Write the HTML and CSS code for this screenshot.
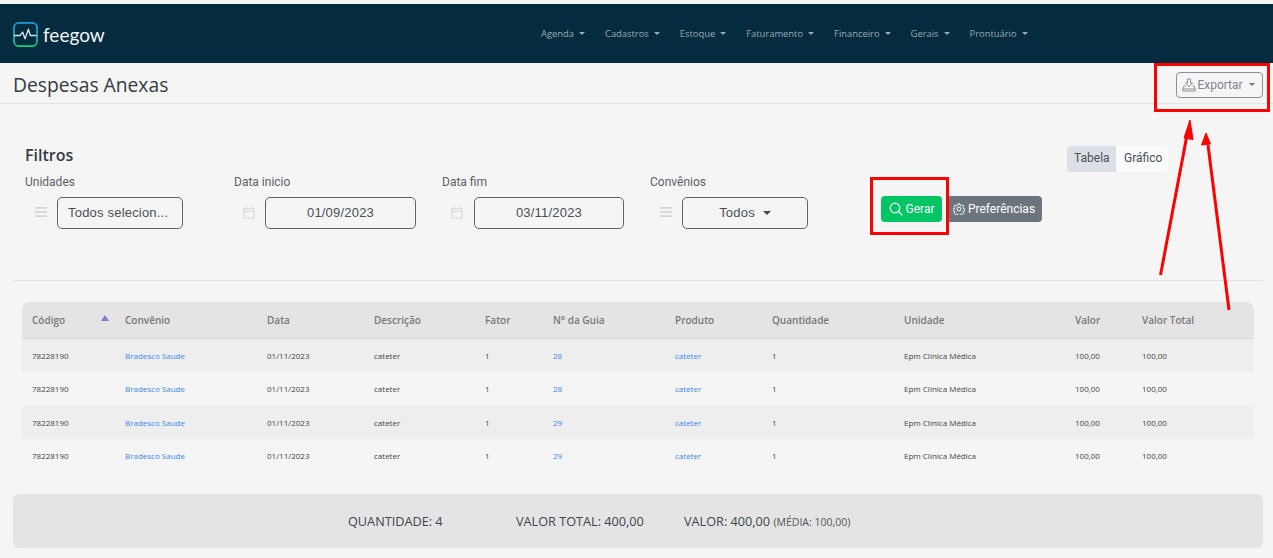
FILE: index.html
```html
<!DOCTYPE html>
<html lang="pt-BR">
<head>
<meta charset="utf-8">
<title>Despesas Anexas</title>
<link rel="stylesheet" href="styles.css">
</head>
<body>
<header class="topbar">
  <a class="brand">
    <svg class="logo" width="25" height="25" viewBox="0 0 26 26" fill="none">
      <defs><linearGradient id="lg" x1="0" y1="0" x2="0" y2="1"><stop offset="0" stop-color="#1e9bd6"/><stop offset=".55" stop-color="#1eaacb"/><stop offset="1" stop-color="#12d27e"/></linearGradient></defs>
      <rect x="1" y="1" width="24" height="24" rx="5" stroke="url(#lg)" stroke-width="1.8"/>
      <path d="M1 14h6.500l2.500-3.500 2.500 7 3.500-10 2 6.500h6.500" stroke="#cfe6ec" stroke-width="1.400" stroke-linejoin="round"/>
    </svg>
    <span class="brand-name">feegow</span>
  </a>
  <nav class="menu">
    <a>Agenda<i class="caret"></i></a>
    <a>Cadastros<i class="caret"></i></a>
    <a>Estoque<i class="caret"></i></a>
    <a>Faturamento<i class="caret"></i></a>
    <a>Financeiro<i class="caret"></i></a>
    <a>Gerais<i class="caret"></i></a>
    <a>Prontuário<i class="caret"></i></a>
  </nav>
</header>

<section class="titlebar">
  <h1>Despesas Anexas</h1>
  <button class="btn-export">
    <svg width="14" height="14" viewBox="0 0 14 14" fill="none" stroke="#8b929a" stroke-width="1"><path d="M5.500 1h3v4h2L7 8.800 3.500 5h2z"/><path d="M3.500 8H2L.8 11v2h12.400v-2L12 8h-1.500M.8 11h12.400"/></svg>
    Exportar<i class="caret dark"></i>
  </button>
</section>

<main class="content">
  <div class="filters-head">
    <h2>Filtros</h2>
    <div class="tabs"><span class="tab active">Tabela</span><span class="tab">Gráfico</span></div>
  </div>
  <div class="filters">
    <div class="field f1">
      <label>Unidades</label>
      <div class="ctrl">
        <svg class="ico" width="12" height="12" viewBox="0 0 12 12" fill="#d4d4d4"><rect y="1" width="12" height="1.600"/><rect y="5.200" width="12" height="1.600"/><rect y="9.400" width="12" height="1.600"/></svg>
        <div class="box w126">Todos selecion...</div>
      </div>
    </div>
    <div class="field f2">
      <label>Data inicio</label>
      <div class="ctrl">
        <svg class="ico" width="12" height="13" viewBox="0 0 12 13" fill="none" stroke="#d8d8d8" stroke-width="1.200"><rect x="1" y="2.500" width="10" height="9.500" rx="1"/><path d="M1 5h10M3.500 .5v2.500M8.500 .5v2.500"/></svg>
        <div class="box w151 center">01/09/2023</div>
      </div>
    </div>
    <div class="field f3">
      <label>Data fim</label>
      <div class="ctrl">
        <svg class="ico wide" width="12" height="13" viewBox="0 0 12 13" fill="none" stroke="#d8d8d8" stroke-width="1.200"><rect x="1" y="2.500" width="10" height="9.500" rx="1"/><path d="M1 5h10M3.500 .5v2.500M8.500 .5v2.500"/></svg>
        <div class="box w150 center">03/11/2023</div>
      </div>
    </div>
    <div class="field f4">
      <label>Convênios</label>
      <div class="ctrl">
        <svg class="ico" width="12" height="12" viewBox="0 0 12 12" fill="#d4d4d4"><rect y="1" width="12" height="1.600"/><rect y="5.200" width="12" height="1.600"/><rect y="9.400" width="12" height="1.600"/></svg>
        <div class="box w126 center">Todos<i class="caret select"></i></div>
      </div>
    </div>
    <div class="actions">
      <button class="btn green">
        <svg width="14" height="14" viewBox="0 0 14 14" fill="none" stroke="#fff" stroke-width="1.200"><circle cx="6" cy="6" r="4.800"/><path d="M9.500 9.500l3.800 3.800"/></svg>
        Gerar
      </button>
      <button class="btn gray">
        <svg width="12" height="12" viewBox="0 0 16 16" fill="none" stroke="#fff" stroke-width="1.300"><circle cx="8" cy="8" r="2.600"/><path d="M6.800 1h2.400l.4 2 1.500.7 1.800-1.100 1.600 1.700-1.100 1.700.6 1.500 2 .4v2.300l-2 .5-.6 1.500 1.100 1.700-1.600 1.600-1.800-1.100-1.500.7-.4 2H6.800l-.4-2-1.500-.7-1.800 1.100-1.600-1.600 1.100-1.700-.6-1.500-2-.5V7.900l2-.4.600-1.500-1.100-1.700 1.600-1.700 1.800 1.100 1.500-.7z"/></svg>
        Preferências
      </button>
    </div>
  </div>
  <hr class="divider">
  <table class="grid">
    <colgroup>
      <col class="c1"><col class="c2"><col class="c3"><col class="c4"><col class="c5"><col class="c6"><col class="c7"><col class="c8"><col class="c9"><col class="c10"><col class="c11">
    </colgroup>
    <thead>
      <tr><th class="sorted">Código</th><th>Convênio</th><th>Data</th><th>Descrição</th><th>Fator</th><th>N° da Guia</th><th>Produto</th><th>Quantidade</th><th>Unidade</th><th>Valor</th><th>Valor Total</th></tr>
    </thead>
    <tbody>
      <tr><td>78228190</td><td><a>Bradesco Saude</a></td><td>01/11/2023</td><td>cateter</td><td>1</td><td><a>28</a></td><td><a>cateter</a></td><td>1</td><td>Epm Clinica Médica</td><td>100,00</td><td>100,00</td></tr>
      <tr><td>78228190</td><td><a>Bradesco Saude</a></td><td>01/11/2023</td><td>cateter</td><td>1</td><td><a>28</a></td><td><a>cateter</a></td><td>1</td><td>Epm Clinica Médica</td><td>100,00</td><td>100,00</td></tr>
      <tr><td>78228190</td><td><a>Bradesco Saude</a></td><td>01/11/2023</td><td>cateter</td><td>1</td><td><a>29</a></td><td><a>cateter</a></td><td>1</td><td>Epm Clinica Médica</td><td>100,00</td><td>100,00</td></tr>
      <tr><td>78228190</td><td><a>Bradesco Saude</a></td><td>01/11/2023</td><td>cateter</td><td>1</td><td><a>29</a></td><td><a>cateter</a></td><td>1</td><td>Epm Clinica Médica</td><td>100,00</td><td>100,00</td></tr>
    </tbody>
  </table>
  <div class="summary">
    <span class="s1">QUANTIDADE: 4</span>
    <span class="s2">VALOR TOTAL: 400,00</span>
    <span>VALOR: 400,00 <small>(MÉDIA: 100,00)</small></span>
  </div>
</main>

<div class="mark mark-export"></div>
<div class="mark mark-gerar"></div>
<svg class="arrows" width="1273" height="558" viewBox="0 0 1273 558" fill="#ff0000" stroke="#ff0000">
  <path d="M1160.500 275L1187 135" stroke-width="3" fill="none"/>
  <path d="M1229 310L1208 145" stroke-width="3" fill="none"/>
  <path d="M1190 120l-6 18 9 1.500z" stroke-width="1"/>
  <path d="M1206 133l-4.500 12 9-1z" stroke-width="1"/>
</svg>
</body>
</html>
```
FILE: styles.css
```css
* { box-sizing: border-box; }
html, body { margin: 0; height: 100%; }
body {
  background: #f5f5f5;
  font-family: "Open Sans", "Noto Sans", sans-serif;
  color: #333;
  overflow: hidden;
  padding-top: 4px;
  position: relative;
}
.topbar {
  height: 59px;
  background: #042c3e;
  display: flex;
  align-items: center;
  padding-left: 13px;
}
.brand { display: flex; align-items: center; gap: 5px; width: 528px; }
.logo { display: block; margin-top: 2px; }
.brand-name {
  font-family: "Lato", sans-serif;
  font-size: 19px;
  color: #f0f4f5;
  line-height: 26px;
  margin-top: 2px;
}
.menu { display: flex; gap: 20px; align-items: center; }
.menu a { font-size: 9.400px; color: #9aa9b2; white-space: nowrap; line-height: 14px; }
.caret {
  display: inline-block;
  width: 0; height: 0;
  margin-left: 5px;
  vertical-align: 2px;
  border-left: 3px solid transparent;
  border-right: 3px solid transparent;
  border-top: 3px solid #9aa9b2;
}
.caret.dark { border-top-color: #777; margin-left: 5px; vertical-align: 3px; }
.caret.select {
  border-left-width: 4px; border-right-width: 4px; border-top-width: 4px;
  border-top-color: #444; margin-left: 8px;
}
.titlebar {
  height: 41px;
  border-bottom: 1px solid #e3e3e3;
  display: flex;
  align-items: center;
  justify-content: space-between;
  padding: 0 10px 0 13px;
}
h1 { font-size: 19.250px; font-weight: 500; color: #333c44; margin: 4px 0 0; line-height: 28px; }
.btn-export {
  width: 87px; height: 26px;
  margin-top: 3px;
  padding: 0 2px 0 0;
  font: 12px "Roboto", sans-serif;
  color: #7f868e;
  background: transparent;
  border: 1px solid #8a9199;
  border-radius: 4px;
  display: flex; align-items: center; justify-content: center; gap: 1px;
}
.content { padding: 0 10px 0 13px; }
.filters-head {
  display: flex;
  justify-content: space-between;
  align-items: flex-start;
  padding: 42px 95px 0 12px;
  height: 71px;
}
h2 { font-size: 16px; font-weight: 600; color: #333c44; margin: -2px 0 0; line-height: 22px; }
.tabs { display: flex; height: 26px; font: 12px/25px "Roboto", sans-serif; color: #495057; border-radius: 4px; overflow: hidden; background: #fafbfc; }
.tab { padding: 0 7px; }
.tab:first-child { width: 49px; }
.tab:last-child { width: 52px; padding-left: 8px; }
.tab.active { background: #dbe0e6; }
.filters { display: flex; padding-left: 12px; height: 60px; }
.field { display: flex; flex-direction: column; }
.f1 { width: 209px; }
.f2 { width: 208px; }
.f3 { width: 208px; }
.f4 { width: 231px; }
.field label {
  font: 12px/16px "Roboto", sans-serif;
  color: #5b6168;
  margin-bottom: 7px;
  margin-top: -1px;
}
.ctrl { display: flex; align-items: center; padding-left: 10px; }
.ico { margin-right: 10px; flex: none; margin-top: -2px; }
.f2 .ico { margin-left: -1px; }
.f3 .ico { margin-left: -1px; margin-right: 11px; }
.box {
  height: 32px;
  border: 1px solid #5f6469;
  border-radius: 5px;
  font: 13px/30px "Liberation Sans", Arial, sans-serif;
  color: #495057;
  padding-left: 10px;
  white-space: nowrap;
  letter-spacing: .2px;
}
.box.center { text-align: center; padding-left: 0; }
.w126 { width: 126px; }
.w151 { width: 151px; }
.w150 { width: 150px; }
.actions { display: flex; gap: 4px; margin-top: 21px; height: 26px; }
.btn {
  height: 26px;
  border: 0;
  border-radius: 4px;
  color: #fff;
  padding: 0;
  font: 12px "Roboto", sans-serif;
  display: flex; align-items: center; justify-content: center; gap: 3px;
}
.green { width: 61px; background: #00c564; }
.gray { width: 96px; background: #6c757d; }
.divider { border: 0; border-top: 1px solid #e2e2e2; margin: 45px 0 21px; }
.grid {
  width: 1232px;
  margin-left: 9px;
  border-collapse: separate;
  border-spacing: 0;
  table-layout: fixed;
  font-size: 8px;
  color: #444;
}
.c1 { width: 93px; } .c2 { width: 142px; } .c3 { width: 107px; } .c4 { width: 111px; }
.c5 { width: 68px; } .c6 { width: 122px; } .c7 { width: 97px; } .c8 { width: 132px; }
.c9 { width: 171px; } .c10 { width: 67px; } .c11 { width: 122px; }
.grid th {
  height: 37px;
  background: #e4e4e4;
  border-bottom: 1px solid #d8d8d8;
  text-align: left;
  font-size: 10px;
  font-weight: 600;
  color: #777;
  padding: 0 10px;
  white-space: nowrap;
}
.grid th:first-child { border-top-left-radius: 8px; }
.grid th:last-child { border-top-right-radius: 8px; }
.grid th.sorted { position: relative; }
.grid th.sorted::after {
  content: "";
  position: absolute;
  right: 6px; top: 13px;
  border-left: 4px solid transparent;
  border-right: 4px solid transparent;
  border-bottom: 6px solid #7a7fd6;
}
.grid td { height: 33.340px; padding: 0 9px 0 10px; white-space: nowrap; overflow: hidden; }
.grid tbody tr:nth-child(odd) td { background: #eee; }
.grid a { color: #3a86ff; }
.summary {
  margin-top: 22px;
  height: 54px;
  width: 1250px;
  background: #e4e4e4;
  border-radius: 6px;
  display: flex;
  align-items: center;
  padding-left: 335px;
  font-size: 12.700px;
  color: #3d4650;
}
.s1 { width: 168px; }
.s2 { width: 168px; }
.summary small { font-size: 10.500px; color: #555; }
.mark { position: absolute; border: 3px solid #ff0000; pointer-events: none; }
.mark-export { left: 1154px; top: 63px; width: 116px; height: 49px; }
.mark-gerar { left: 870px; top: 177px; width: 79px; height: 58px; }
.arrows { position: absolute; left: 0; top: 0; pointer-events: none; }
```
